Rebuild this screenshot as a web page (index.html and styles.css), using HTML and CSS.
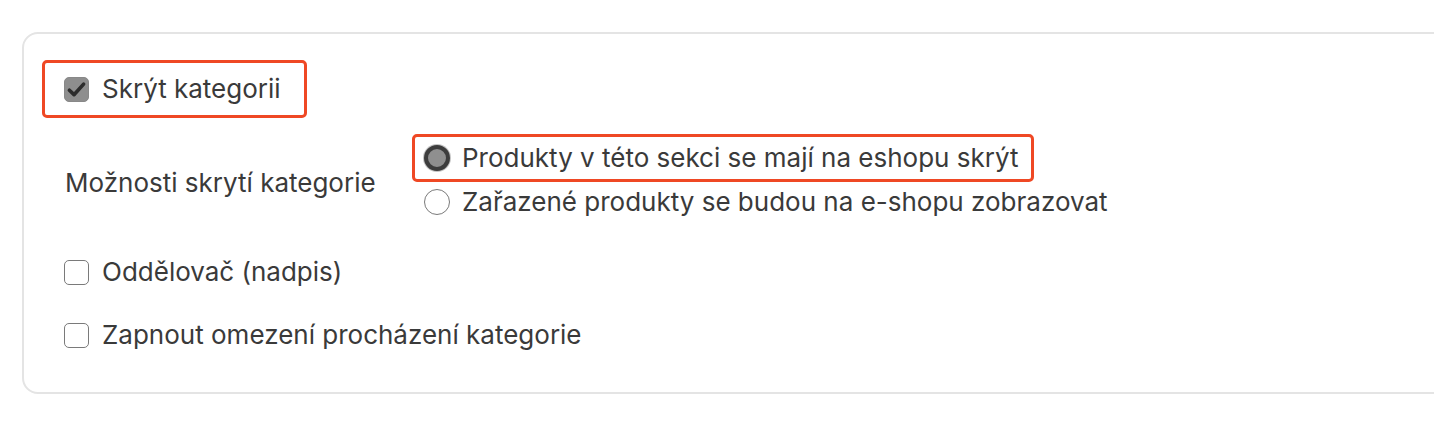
FILE: index.html
```html
<!DOCTYPE html>
<html lang="cs">
<head>
<meta charset="utf-8">
<title>Kategorie</title>
<link rel="stylesheet" href="styles.css">
</head>
<body>
<div class="page">
  <div class="card">
    <label class="row highlight first">
      <span class="box checked">
        <svg viewBox="0 0 24 24" width="23" height="23"><path d="M4.6 12.8 L9.4 17.4 L19.4 6.4" fill="none" stroke="#2c2c2c" stroke-width="3.8" stroke-linecap="round" stroke-linejoin="round"/></svg>
      </span>
      <span class="text">Skrýt kategorii</span>
    </label>

    <div class="options">
      <div class="options-label">Možnosti skrytí kategorie</div>
      <div class="radios">
        <label class="radio-row highlight">
          <span class="radio selected"></span>
          <span class="text">Produkty v této sekci se mají na eshopu skrýt</span>
        </label>
        <label class="radio-row plain">
          <span class="radio"></span>
          <span class="text">Zařazené produkty se budou na e-shopu zobrazovat</span>
        </label>
      </div>
    </div>

    <label class="row third">
      <span class="box"></span>
      <span class="text">Oddělovač (nadpis)</span>
    </label>

    <label class="row fourth">
      <span class="box"></span>
      <span class="text">Zapnout omezení procházení kategorie</span>
    </label>
  </div>
</div>
</body>
</html>
```

FILE: styles.css
```css
* { box-sizing: border-box; }

html, body {
  margin: 0;
  padding: 0;
  background: #ffffff;
  overflow: hidden;
}

body {
  font-family: "Inter", "Noto Sans", sans-serif;
  font-size: 26px;
  color: #3a3a3a;
}

.page {
  padding: 32px 0 0 22px;
}

.card {
  width: 1440px;
  border: 2px solid #e4e4e4;
  border-radius: 16px;
  padding: 26px 18px 42px 18px;
  display: flex;
  flex-direction: column;
  align-items: flex-start;
}

.row {
  display: inline-flex;
  align-items: center;
  gap: 13px;
  line-height: 30px;
  padding: 0 0 0 22px;
}

.highlight {
  border: 3px solid #ef4824;
  border-radius: 5px;
}

.row.first {
  padding: 11px 23px 11px 19px;
}

.row.third {
  margin-top: 35px;
}

.row.fourth {
  margin-top: 33px;
}

.box {
  width: 25px;
  height: 25px;
  border: 1.5px solid #7a7a7a;
  border-radius: 5px;
  background: #fff;
  display: flex;
  align-items: center;
  justify-content: center;
  flex: none;
}

.box.checked {
  background: #8e8e8e;
  border-color: #888;
}

.options {
  display: flex;
  align-items: center;
  margin-top: 16px;
}

.options-label {
  width: 370px;
  padding-left: 23px;
  padding-top: 10px;
  line-height: 30px;
}

.radios {
  display: flex;
  flex-direction: column;
  align-items: flex-start;
}

.radio-row {
  display: inline-flex;
  align-items: center;
  gap: 12px;
  line-height: 30px;
}

.radio-row.highlight {
  padding: 6px 13px 6px 9px;
}

.radio-row.plain {
  padding: 5px 0 5px 12px;
}

.radio {
  width: 26px;
  height: 26px;
  border-radius: 50%;
  border: 1.5px solid #7a7a7a;
  background: #fff;
  flex: none;
}

.radio.selected {
  border: 4px solid #3d3d3d;
  background: #8f8f8f;
  box-shadow: 0 0 0 1px #c4c4c4;
}
```
